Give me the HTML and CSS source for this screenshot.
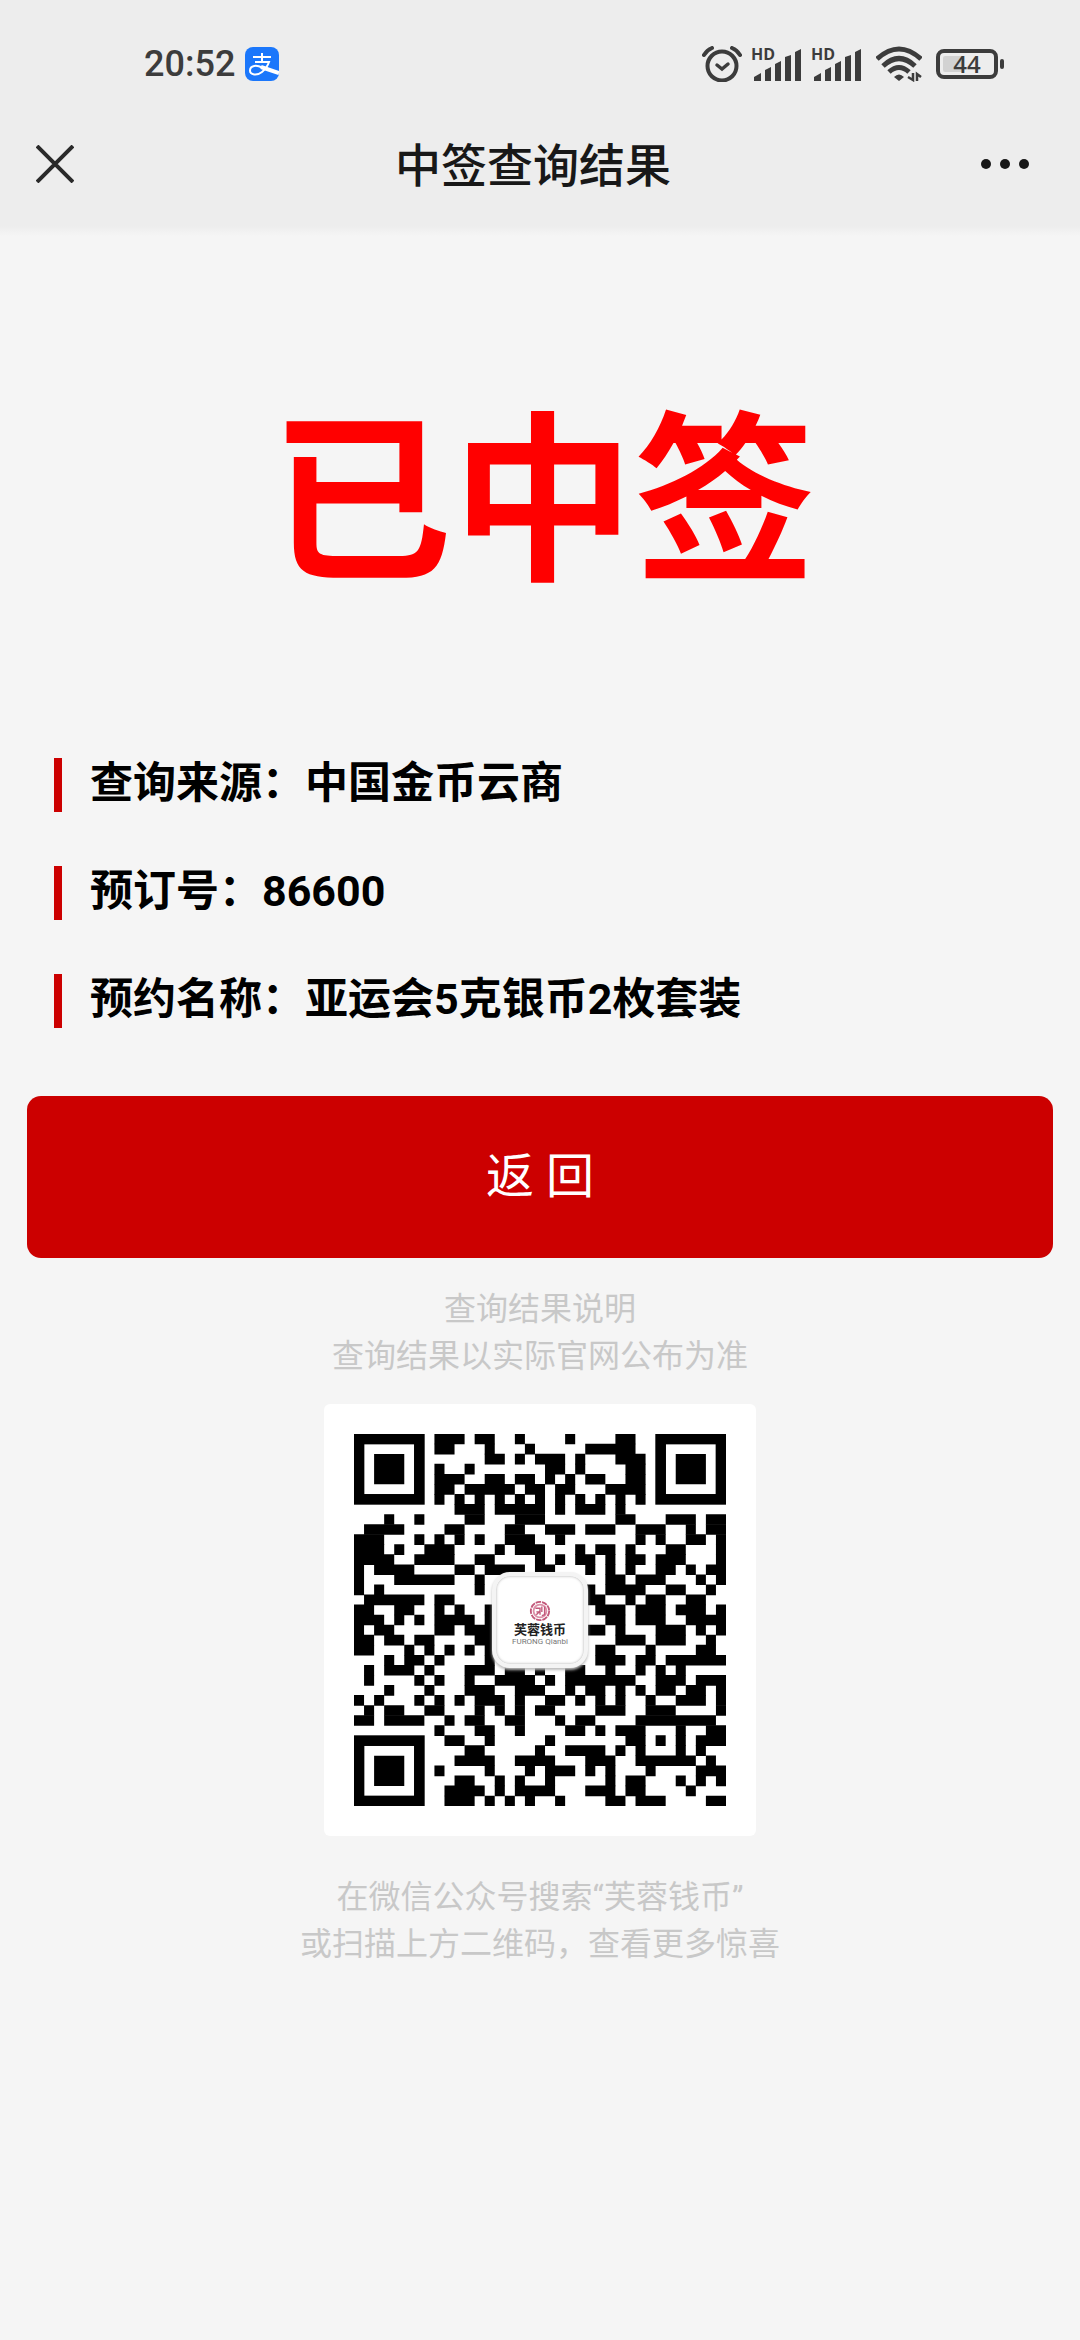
FILE: index.html
```html
<!DOCTYPE html>
<html lang="zh-CN">
<head>
<meta charset="utf-8">
<meta name="viewport" content="width=device-width, initial-scale=1">
<title>中签查询结果</title>
<link rel="stylesheet" href="styles.css">
</head>
<body>
<header class="header">
  <div class="status">
    <div class="status-left">
      <span class="time">20:52</span>
      <svg class="pay" width="34" height="34" viewBox="0 0 34 34" aria-hidden="true">
        <rect width="34" height="34" rx="8" fill="#1b77fb"/>
        <g fill="none" stroke="#fff" stroke-width="2">
          <path d="M8 10H26M17 6V15M10 15H24Q22 21 17 25C12 29 5 28 5 23.500C5 18 12 18 17 20.500"/>
          <path d="M16 20L34 26" stroke-width="4"/>
        </g>
      </svg>
    </div>
    <div class="status-right">
      <svg class="alarm" width="40" height="36" viewBox="0 0 40 36" fill="none" stroke="#3c3c3c" stroke-linecap="round" aria-hidden="true">
        <circle cx="20" cy="20" r="14.500" stroke-width="4"/>
        <path d="M15 19L20 23L26 18" stroke-width="3.500"/>
        <path d="M2 9Q5 4 10 2M38 9Q35 4 30 2" stroke-width="4"/>
      </svg>
      <svg class="signal" width="52" height="50" viewBox="-1 -8 52 50" fill="#3c3c3c" aria-hidden="true">
        <text class="hd" x="-1" y="13">HD</text>
        <path d="M2 34V30L9 26V34ZM13 34V23L19 20V34ZM23 34V17L29 14V34ZM33 34V10L39 8V34ZM43 34V5L49 2V34Z"/>
      </svg>
      <svg class="signal" width="52" height="50" viewBox="-1 -8 52 50" fill="#3c3c3c" aria-hidden="true">
        <text class="hd" x="-1" y="13">HD</text>
        <path d="M2 34V30L9 26V34ZM13 34V23L19 20V34ZM23 34V17L29 14V34ZM33 34V10L39 8V34ZM43 34V5L49 2V34Z"/>
      </svg>
      <svg class="wifi" width="46" height="36" viewBox="0 0 46 36" fill="none" stroke="#3c3c3c" stroke-width="5" aria-hidden="true">
        <path d="M1 13Q23 -7 45 13M7 20Q23 5 39 20M13 26Q23 17 33 26"/>
        <path d="M18 31Q23 26 28 31L23 35Z" fill="#3c3c3c" stroke="none"/>
        <path d="M37 27V34L32 31M41 35V28L45 31" stroke-width="2.500"/>
      </svg>
      <svg class="battery" width="68" height="40" viewBox="0 -5 68 40" aria-hidden="true">
        <rect x="2" y="2" width="58" height="26" rx="6" fill="none" stroke="#3c3c3c" stroke-width="4"/>
        <rect x="7" y="7" width="20" height="16" rx="2" fill="#d2d2d2"/>
        <rect x="64" y="10" width="4" height="10" rx="2" fill="#3c3c3c"/>
        <text class="level" x="31" y="24" text-anchor="middle">44</text>
      </svg>
    </div>
  </div>
  <nav class="nav">
    <button class="icon-button" type="button" aria-label="关闭">
      <svg width="38" height="38" viewBox="0 0 38 38" stroke="#2a2a2a" stroke-width="4" aria-hidden="true"><path d="M1 1L37 37M37 1L1 37"/></svg>
    </button>
    <h1 class="nav-title">中签查询结果</h1>
    <button class="icon-button" type="button" aria-label="更多">
      <svg width="50" height="12" viewBox="0 0 50 12" fill="#181818" aria-hidden="true"><circle cx="6" cy="6" r="5"/><circle cx="25" cy="6" r="5"/><circle cx="44" cy="6" r="5"/></svg>
    </button>
  </nav>
</header>

<main class="page">
  <h2 class="result">已中签</h2>

  <ul class="details">
    <li class="detail">查询来源：中国金币云商</li>
    <li class="detail">预订号：86600</li>
    <li class="detail">预约名称：亚运会5克银币2枚套装</li>
  </ul>

  <button class="back" type="button">返 回</button>

  <p class="note">查询结果说明<br>查询结果以实际官网公布为准</p>

  <div class="qr-card">
    <svg class="qr" viewBox="0 0 37 37" role="img" aria-label="芙蓉钱币公众号二维码">
      <g fill="none" stroke="#000" stroke-width="1.060">
        <rect x=".5" y=".5" width="6" height="6"/>
        <rect x="30.500" y=".5" width="6" height="6"/>
        <rect x=".5" y="30.500" width="6" height="6"/>
        <path d="M2 3.500H5M32 3.500H35M2 33.500H5" stroke-width="3"/>
        <path d="M8 .5H11M12 .5H14M16 .5H17M21 .5H22M26 .5H28"/>
        <path d="M8 1.500H10M13 1.500H14M17 1.500H18M23 1.500H28"/>
        <path d="M13 2.500H15M16 2.500H17M18 2.500H21M22 2.500H23M26 2.500H29"/>
        <path d="M8 3.500H9M11 3.500H12M19 3.500H21M22 3.500H23M27 3.500H29"/>
        <path d="M8 4.500H11M13 4.500H15M16 4.500H18M19 4.500H20M21 4.500H22M23 4.500H25M27 4.500H29"/>
        <path d="M8 5.500H10M11 5.500H16M17 5.500H19M20 5.500H22M25 5.500H29"/>
        <path d="M8 6.500H9M10 6.500H11M12 6.500H13M14 6.500H15M16 6.500H17M18 6.500H19M20 6.500H21M22 6.500H23M24 6.500H25M26 6.500H27M28 6.500H29"/>
        <path d="M10 7.500H13M14 7.500H19M20 7.500H21M22 7.500H25M26 7.500H27"/>
        <path d="M3 8.500H4M6 8.500H7M11 8.500H13M16 8.500H19M26 8.500H28M31 8.500H34M35 8.500H37"/>
        <path d="M1 9.500H5M9 9.500H11M15 9.500H17M19 9.500H22M23 9.500H26M28 9.500H31M33 9.500H34M35 9.500H37"/>
        <path d="M0 10.500H3M6 10.500H7M8 10.500H9M10 10.500H11M12 10.500H13M15 10.500H18M20 10.500H21M28 10.500H29M30 10.500H31M33 10.500H35M36 10.500H37"/>
        <path d="M0 11.500H3M4 11.500H5M7 11.500H10M14 11.500H15M16 11.500H19M22 11.500H23M24 11.500H26M27 11.500H28M31 11.500H33M36 11.500H37"/>
        <path d="M0 12.500H4M6 12.500H10M12 12.500H14M18 12.500H19M20 12.500H21M22 12.500H24M25 12.500H26M27 12.500H29M30 12.500H33M36 12.500H37"/>
        <path d="M0 13.500H1M2 13.500H6M10 13.500H12M13 13.500H17M18 13.500H20M23 13.500H24M25 13.500H26M27 13.500H28M30 13.500H32M33 13.500H34M35 13.500H37"/>
        <path d="M0 14.500H1M4 14.500H10M12 14.500H13M25 14.500H27M28 14.500H31M34 14.500H35M36 14.500H37"/>
        <path d="M0 15.500H1M2 15.500H3M12 15.500H13M23 15.500H24M25 15.500H29M31 15.500H33M35 15.500H36"/>
        <path d="M1 16.500H7M8 16.500H10M23 16.500H25M27 16.500H28M29 16.500H31M33 16.500H35"/>
        <path d="M0 17.500H2M4 17.500H6M8 17.500H9M10 17.500H11M13 17.500H14M24 17.500H27M28 17.500H31M32 17.500H35M36 17.500H37"/>
        <path d="M0 18.500H3M4 18.500H5M6 18.500H7M8 18.500H12M13 18.500H14M25 18.500H27M28 18.500H31M33 18.500H37"/>
        <path d="M0 19.500H1M2 19.500H4M8 19.500H10M11 19.500H14M23 19.500H25M26 19.500H27M30 19.500H33M34 19.500H35M36 19.500H37"/>
        <path d="M0 20.500H2M3 20.500H5M6 20.500H8M12 20.500H14M26 20.500H29M30 20.500H33M35 20.500H36"/>
        <path d="M0 21.500H2M5 21.500H6M7 21.500H8M9 21.500H10M11 21.500H12M13 21.500H14M24 21.500H26M29 21.500H30M34 21.500H36"/>
        <path d="M3 22.500H4M5 22.500H7M8 22.500H9M13 22.500H14M24 22.500H27M28 22.500H30M31 22.500H37"/>
        <path d="M1 23.500H2M3 23.500H6M7 23.500H8M11 23.500H14M15 23.500H17M18 23.500H19M21 23.500H23M25 23.500H26M28 23.500H29M30 23.500H31M32 23.500H33"/>
        <path d="M1 24.500H2M6 24.500H7M8 24.500H9M11 24.500H12M14 24.500H18M19 24.500H20M21 24.500H28M30 24.500H33M34 24.500H37"/>
        <path d="M3 25.500H4M7 25.500H8M11 25.500H14M16 25.500H19M21 25.500H22M23 25.500H25M26 25.500H27M28 25.500H29M30 25.500H32M33 25.500H35M36 25.500H37"/>
        <path d="M0 26.500H1M2 26.500H3M6 26.500H7M8 26.500H9M10 26.500H11M12 26.500H15M16 26.500H17M19 26.500H21M22 26.500H23M24 26.500H25M26 26.500H27M29 26.500H30M32 26.500H35M36 26.500H37"/>
        <path d="M1 27.500H2M3 27.500H5M7 27.500H9M12 27.500H13M14 27.500H15M16 27.500H17M18 27.500H20M24 27.500H27M29 27.500H32M36 27.500H37"/>
        <path d="M0 28.500H2M3 28.500H7M9 28.500H10M11 28.500H13M15 28.500H17M20 28.500H21M22 28.500H24M28 28.500H36"/>
        <path d="M8 29.500H9M12 29.500H14M16 29.500H17M21 29.500H23M24 29.500H25M26 29.500H29M32 29.500H33M35 29.500H37"/>
        <path d="M9 30.500H11M13 30.500H14M19 30.500H20M27 30.500H29M30 30.500H31M32 30.500H33M34 30.500H37"/>
        <path d="M11 31.500H13M18 31.500H19M21 31.500H25M26 31.500H27M28 31.500H29M32 31.500H33M34 31.500H35"/>
        <path d="M10 32.500H14M16 32.500H20M23 32.500H26M28 32.500H34M35 32.500H36"/>
        <path d="M8 33.500H9M13 33.500H14M17 33.500H18M19 33.500H22M23 33.500H24M25 33.500H26M29 33.500H30M34 33.500H37"/>
        <path d="M10 34.500H12M14 34.500H15M16 34.500H17M19 34.500H20M25 34.500H26M27 34.500H29M32 34.500H33M34 34.500H35M36 34.500H37"/>
        <path d="M9 35.500H13M14 35.500H15M16 35.500H20M23 35.500H26M27 35.500H29M33 35.500H34"/>
        <path d="M9 36.500H12M13 36.500H14M15 36.500H16M17 36.500H18M20 36.500H21M25 36.500H27M28 36.500H31M35 36.500H37"/>
      </g>
    </svg>
    <div class="brand">
      <svg width="22" height="22" viewBox="0 0 24 24" fill="none" stroke="#c2587a" stroke-width="2" aria-hidden="true">
        <circle cx="12" cy="12" r="10" stroke-dasharray="6 1"/>
        <circle cx="12" cy="12" r="7" stroke="#dc90a8"/>
        <path d="M7 9H12V16M8 13H12M14 7V13M17 7V16L14 17M8 16L12 12" stroke-width="1.500"/>
      </svg>
      <span class="brand-name">芙蓉钱币</span>
      <span class="brand-latin">FURONG Qianbi</span>
    </div>
  </div>

  <p class="note">在微信公众号搜索“芙蓉钱币”<br>或扫描上方二维码，查看更多惊喜</p>
</main>
</body>
</html>
```

FILE: styles.css
```css
* {
  box-sizing: border-box;
}

body {
  margin: 0;
  min-height: 100vh;
  background: #f5f5f5;
  color: #000;
  font-family: Roboto, "Noto Sans CJK SC", sans-serif;
}

button {
  border: 0;
  padding: 0;
  font: inherit;
  cursor: pointer;
}

/* Status bar and title bar */
.header {
  background: linear-gradient(#ededed calc(100% - 10px), #f5f5f5);
}

.status {
  display: flex;
  justify-content: space-between;
  align-items: center;
  height: 96px;
  padding: 32px 76px 0 144px;
  color: #3c3c3c;
}

.status-left,
.status-right {
  display: flex;
  align-items: center;
}

.status-left {
  gap: 10px;
}

.status-right {
  gap: 10px;
}

.signal {
  margin: 0 -1px;
}

.wifi {
  margin: 0 4px;
}

.time {
  font-size: 36px;
  font-weight: 500;
  line-height: 40px;
}

.hd {
  font: 700 16px "Open Sans", sans-serif;
}

.level {
  fill: #3c3c3c;
  font: 600 24px "Open Sans", sans-serif;
}

.nav {
  display: grid;
  grid-template-columns: 1fr auto 1fr;
  align-items: center;
  height: 140px;
  padding: 0 50px 4px 36px;
}

.icon-button {
  display: flex;
  background: none;
}

.icon-button:first-child {
  justify-self: start;
}

.icon-button:last-child {
  justify-self: end;
}

.nav-title {
  margin: 0;
  padding-top: 4px;
  color: #181818;
  font-size: 46px;
  font-weight: 500;
  line-height: 64px;
}

/* Result */
.page {
  display: flex;
  flex-direction: column;
  padding: 136px 27px 80px;
}

.result {
  margin: 0 0 122px;
  padding-left: 6px;
  color: #f00;
  font-size: 182px;
  font-weight: 700;
  line-height: 264px;
  text-align: center;
}

.details {
  display: flex;
  flex-direction: column;
  gap: 54px;
  margin: 0 0 68px;
  padding: 0 27px;
  list-style: none;
}

.detail {
  padding: 0 0 4px 28px;
  border-left: 8px solid #c00;
  font-size: 43px;
  font-weight: 700;
  line-height: 50px;
}

.back {
  margin-bottom: 28px;
  padding: 49px 0;
  border-radius: 14px;
  background: #c00;
  color: #fff;
  font-size: 48px;
  line-height: 64px;
}

.note {
  margin: 0;
  color: #c8c8c8;
  font-size: 32px;
  line-height: 47px;
  text-align: center;
}

/* QR code card */
.qr-card {
  position: relative;
  align-self: center;
  width: 432px;
  margin: 24px 0 38px;
  padding: 30px;
  border-radius: 6px;
  background: #fff;
}

.qr {
  display: block;
  width: 100%;
}

.brand {
  position: absolute;
  inset: 0;
  display: flex;
  flex-direction: column;
  align-items: center;
  width: 96px;
  height: 96px;
  margin: auto;
  padding-top: 24px;
  border: 4px solid #f4f4f4;
  border-radius: 18px;
  background: #fff;
  box-shadow: inset 0 0 3px #aaa, 0 2px 3px #bbb;
}

.brand-name {
  color: #222;
  font-size: 13px;
  font-weight: 700;
  line-height: 16px;
}

.brand-latin {
  color: #777;
  font-size: 8px;
  line-height: 8px;
}
```
